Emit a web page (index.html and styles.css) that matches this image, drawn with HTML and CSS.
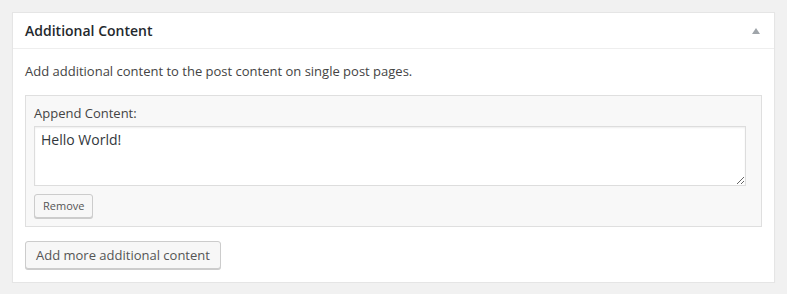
FILE: index.html
```html
<!DOCTYPE html>
<html>
<head>
<meta charset="utf-8">
<link rel="stylesheet" href="styles.css">
</head>
<body>
<div class="postbox">
  <div class="hndle">
    <h3 class="title">Additional Content</h3>
    <span class="toggle" aria-hidden="true"></span>
  </div>
  <div class="inside">
    <p class="desc">Add additional content to the post content on single post pages.</p>
    <div class="item">
      <label class="label" for="c1">Append Content:</label>
      <textarea id="c1" class="field">Hello World!</textarea>
      <button class="btn btn-small" type="button">Remove</button>
    </div>
    <button class="btn btn-add" type="button">Add more additional content</button>
  </div>
</div>
</body>
</html>
```
FILE: styles.css
```css
html, body {
  margin: 0;
  padding: 0;
  background: #f1f1f1;
}
body {
  padding: 12px 12px 0 12px;
  font-family: "Open Sans", "Liberation Sans", sans-serif;
  color: #444;
  font-size: 13px;
}
.postbox {
  width: 761px;
  background: #fff;
  border: 1px solid #e5e5e5;
  box-shadow: 0 1px 1px rgba(0,0,0,.04);
}
.hndle {
  display: flex;
  align-items: center;
  justify-content: space-between;
  height: 35px;
  padding: 0 14px 0 12px;
  border-bottom: 1px solid #eee;
}
.title {
  margin: 0;
  font-size: 14px;
  font-weight: 600;
  color: #23282d;
  line-height: 20px;
}
.toggle {
  width: 0;
  height: 0;
  border-left: 4px solid transparent;
  border-right: 4px solid transparent;
  border-bottom: 6px solid #a0a5aa;
  margin-top: 1px;
}
.inside {
  padding: 0 12px 13px 12px;
}
.desc {
  margin: 13px 0 14px 0;
  line-height: 19px;
  font-size: 13px;
  color: #444;
}
.item {
  background: #f8f8f8;
  border: 1px solid #dfdfdf;
  padding: 8px;
}
.label {
  display: block;
  font-size: 13px;
  line-height: 19px;
  margin-bottom: 3px;
  color: #444;
}
.field {
  display: block;
  box-sizing: border-box;
  width: 99%;
  height: 60px;
  margin: 0 0 8px 0;
  padding: 3px 6px;
  border: 1px solid #ddd;
  box-shadow: inset 0 1px 2px rgba(0,0,0,.07);
  background: #fff;
  font-family: "Open Sans", "Liberation Sans", sans-serif;
  font-size: 14px;
  line-height: 20px;
  color: #32373c;
  resize: both;
  outline: none;
}
.btn {
  box-sizing: border-box;
  display: inline-block;
  font-family: "Open Sans", "Liberation Sans", sans-serif;
  background: #f7f7f7;
  border: 1px solid #ccc;
  border-radius: 3px;
  box-shadow: 0 1px 0 #ccc;
  color: #555;
  cursor: pointer;
  margin: 0;
}
.btn-small {
  height: 24px;
  font-size: 11px;
  line-height: 22px;
  padding: 0 8px 1px;
}
.btn-add {
  margin-top: 14px;
  height: 28px;
  font-size: 13px;
  line-height: 26px;
  padding: 0 10px 1px;
}
```
